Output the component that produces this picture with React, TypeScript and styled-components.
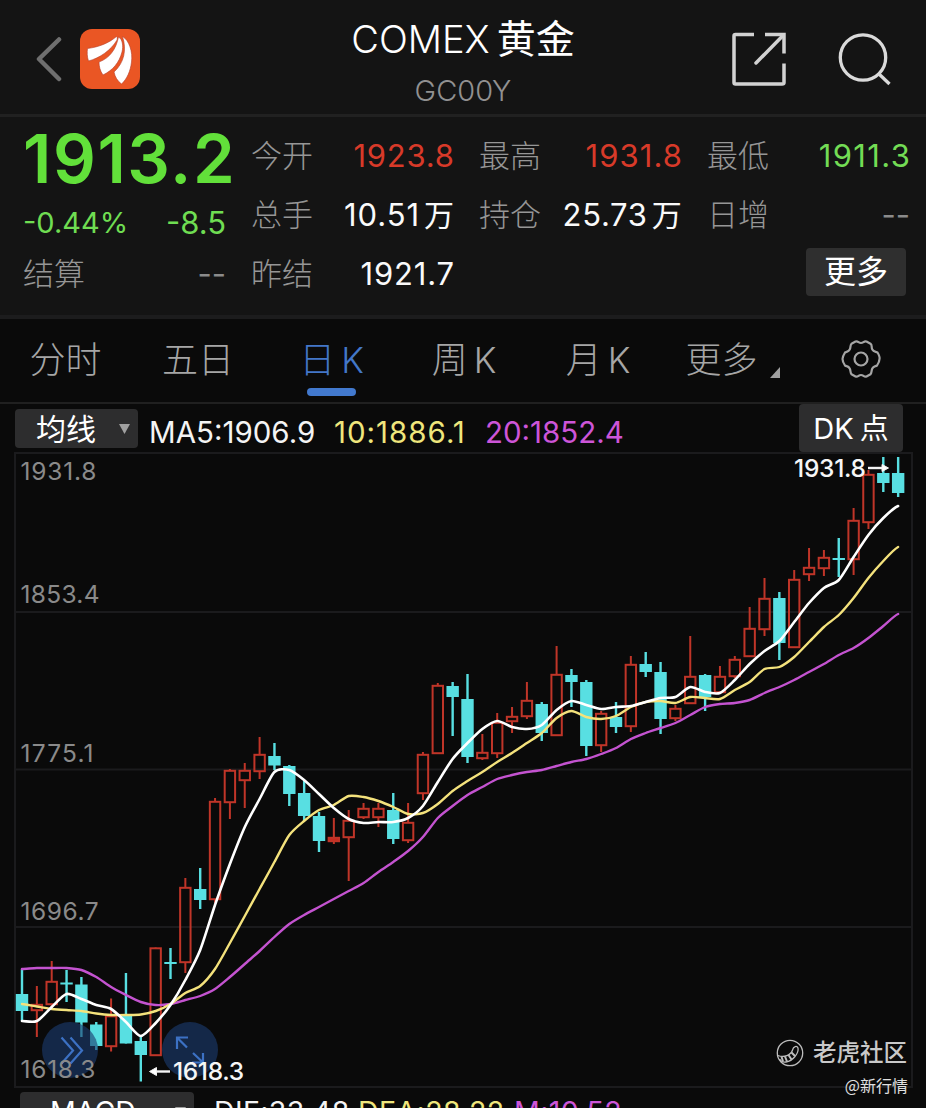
import React from "react";
import styled, { createGlobalStyle } from "styled-components";

const GlobalStyle = createGlobalStyle`
  html, body { margin: 0; padding: 0; background: #0a0a0a; }
  body { overflow: hidden; }
  * { box-sizing: border-box; }
`;

const FONT = `Inter, "Noto Sans CJK SC", sans-serif`;

const Screen = styled.main`
  width: 926px;
  height: 1108px;
  overflow: hidden;
  display: flex;
  flex-direction: column;
  background: #0a0a0a;
  color: #fff;
  font-family: ${FONT};
  white-space: nowrap;
`;

const Header = styled.header`
  flex: none;
  height: 117px;
  display: grid;
  grid-template-columns: 263px 400px 263px;
  background: #141414;
  border-bottom: 3px solid #212121;
`;

const HeaderSide = styled.div<{ $end?: boolean }>`
  display: flex;
  align-items: center;
  height: 118px;
  gap: ${(p) => (p.$end ? 52 : 18)}px;
  justify-content: ${(p) => (p.$end ? "flex-end" : "flex-start")};
  padding: ${(p) => (p.$end ? "0 35px 0 0" : "0 0 0 35px")};
`;

const Titles = styled.div`
  display: flex;
  flex-direction: column;
  align-items: center;
  padding-top: 14px;
`;

const Title = styled.h1`
  margin: 0;
  display: flex;
  gap: 7px;
  font-size: 38px;
  line-height: 50px;
  font-weight: 300;
`;

const TitleCjk = styled.span`
  font-size: 39px;
  font-weight: 400;
`;

const Code = styled.div`
  margin-top: 9px;
  font-size: 29px;
  line-height: 36px;
  font-weight: 300;
  color: #919191;
`;

const Quotes = styled.section`
  flex: none;
  height: 202px;
  display: grid;
  grid-template-columns: repeat(4, 203px);
  column-gap: 25px;
  padding: 9px 17px 0 23px;
  background: #141414;
  border-bottom: 4px solid #1c1c1d;
`;

const Column = styled.div`
  display: flex;
  flex-direction: column;
`;

const Cell = styled.div<{ $shift?: number }>`
  height: 59px;
  width: 203px;
  display: flex;
  align-items: center;
  justify-content: space-between;
  margin-top: ${(p) => p.$shift ?? 0}px;
`;

const Label = styled.span`
  font-size: 31px;
  line-height: 40px;
  color: #969696;
  font-weight: 300;
`;

const Value = styled.span<{ $color?: string; $ls?: number; $size?: number }>`
  display: flex;
  align-items: baseline;
  font-size: ${(p) => p.$size ?? 31}px;
  line-height: 40px;
  letter-spacing: ${(p) => p.$ls ?? 0}px;
  margin-right: ${(p) => -(p.$ls ?? 0)}px;
  color: ${(p) => p.$color ?? "#fafafa"};
`;

const Cjk = styled.span`
  margin: 0 1px 0 4px;
  font-size: 30px;
  letter-spacing: 0;
`;

const Price = styled.div`
  height: 67px;
  font-size: 67px;
  line-height: 65px;
  font-weight: 600;
  letter-spacing: 1.6px;
  color: #62e03a;
`;

const MoreButton = styled.button`
  align-self: flex-end;
  margin: 4px 4px 0 0;
  width: 100px;
  height: 48px;
  padding: 0 0 1px;
  border: 0;
  border-radius: 4px;
  background: #2f2f2f;
  color: #fff;
  font-family: ${FONT};
  font-size: 32px;
  line-height: 44px;
`;

const Tabs = styled.nav`
  flex: none;
  height: 85px;
  display: grid;
  grid-template-columns: 131px 134px 135px 130px 138px 107px 151px;
  border-bottom: 2px solid #202020;
`;

const Tab = styled.div<{ $active?: boolean }>`
  position: relative;
  display: flex;
  justify-content: center;
  gap: 6px;
  padding-top: 15px;
  font-size: 36px;
  line-height: 52px;
  font-weight: 300;
  color: ${(p) => (p.$active ? "#4377c8" : "#a6a6a6")};
  &::after {
    content: "";
    display: ${(p) => (p.$active ? "block" : "none")};
    position: absolute;
    left: 42px;
    bottom: 6px;
    width: 49px;
    height: 8px;
    border-radius: 4px;
    background: #4279ce;
  }
`;

const TabLetter = styled.span`
  margin-right: 2px;
  font-size: 35px;
`;

const Corner = styled.svg`
  position: absolute;
  right: -5px;
  top: 48px;
`;

const GearCell = styled.div`
  padding: 19px 0 0 65px;
`;

const Legend = styled.div`
  flex: none;
  height: 48px;
  display: flex;
  align-items: flex-start;
  padding: 0 23px 0 15px;
`;

const Picker = styled.div<{ $w: number; $h: number }>`
  flex: none;
  width: ${(p) => p.$w}px;
  height: ${(p) => p.$h}px;
  display: flex;
  align-items: center;
  justify-content: space-between;
  border-radius: 4px;
  background: #2d2d2e;
`;

const AveragePicker = styled(Picker)`
  margin-top: 5px;
  padding: 0 8px 0 21px;
  font-size: 30px;
  line-height: 36px;
`;

const Average = styled.span<{ $color: string; $w: number; $ls?: number }>`
  width: ${(p) => p.$w}px;
  margin-top: 8px;
  font-size: 29.5px;
  line-height: 40px;
  letter-spacing: ${(p) => p.$ls ?? 0}px;
  color: ${(p) => p.$color};
`;

const Averages = styled.div`
  flex: 1;
  display: flex;
  padding-left: 11px;
`;

const DkButton = styled.div`
  width: 104px;
  height: 48px;
  display: flex;
  justify-content: center;
  gap: 6px;
  border-radius: 4px;
  background: #2d2d2e;
  font-size: 29px;
  line-height: 49px;
`;

const ChartBox = styled.section`
  position: relative;
  flex: none;
  height: 640px;
`;

const ChartSvg = styled.svg`
  display: block;
`;

const Watermark = styled.div`
  position: absolute;
  right: 19px;
  top: 583px;
  display: flex;
  align-items: center;
  gap: 9px;
  font-size: 23.5px;
  line-height: 36px;
  font-weight: 500;
  color: #c9c9c9;
`;

const Author = styled.div`
  position: absolute;
  right: 18px;
  top: 622px;
  font-family: "Noto Sans CJK SC", sans-serif;
  font-size: 16px;
  line-height: 22px;
  color: #e0e0e0;
`;

const MacdBar = styled.div`
  flex: none;
  height: 50px;
  display: flex;
  align-items: flex-start;
  padding-left: 20px;
  font-size: 28.5px;
  line-height: 36px;
`;

const MacdPicker = styled(Picker)`
  padding: 0 8px 0 30px;
  margin-right: 20px;
`;

const MacdValue = styled.span<{ $color: string; $w: number }>`
  width: ${(p) => p.$w}px;
  margin-top: 2px;
  letter-spacing: 0.4px;
  color: ${(p) => p.$color};
`;

/* kind, high, open/close top, open/close bottom, low */
type Candle = ["u" | "d" | "f", number, number, number, number];

const candles: Candle[] = [
  ["d", 969, 994, 1011, 1021], ["u", 986, 1004, 1011, 1037], ["u", 961, 981, 1005, 1008],
  ["d", 970, 982.5, 984.5, 1002], ["d", 977, 984.5, 1022.5, 1037], ["d", 1022, 1024.5, 1046, 1050],
  ["u", 998.5, 1015.5, 1047, 1051.5], ["d", 973, 1015, 1043.5, 1043.5], ["d", 1035, 1041, 1055, 1081.5],
  ["u", 947, 947.5, 1056, 1056], ["d", 948, 962, 964, 979], ["u", 878, 887, 963, 973],
  ["d", 868, 889, 900, 909], ["u", 798, 801, 900, 903], ["u", 769, 770, 803, 819],
  ["u", 763, 770, 781, 808], ["u", 737, 754, 772, 779], ["d", 743, 756, 765.5, 770],
  ["d", 765, 766, 794, 806], ["d", 781, 793, 816, 821], ["d", 812, 816, 841, 852],
  ["f", 818, 837, 842, 844], ["u", 810, 820, 838, 881], ["u", 803, 808, 818, 819],
  ["u", 803, 808, 818, 827], ["d", 793, 810, 839, 844], ["u", 803, 822, 841, 843],
  ["u", 752, 754, 794, 800], ["u", 683, 685, 754, 754], ["d", 682, 686, 697, 736],
  ["d", 674, 699, 757, 763], ["u", 734, 752, 759, 760], ["u", 713, 722, 754, 758],
  ["u", 707, 716, 722, 733], ["u", 682, 700, 717, 719], ["d", 702, 704, 733, 741],
  ["u", 646, 674, 736, 736], ["d", 669, 675, 682, 707], ["d", 680, 682, 746, 756],
  ["u", 711, 713, 746, 752], ["d", 702, 717, 727, 733], ["u", 656, 664, 727, 732],
  ["d", 652, 664, 672, 677], ["d", 662, 672, 719, 734], ["u", 705, 708, 719, 721],
  ["u", 636, 676, 704, 704], ["d", 674, 675, 697, 711], ["u", 666, 676, 693, 693],
  ["u", 656, 659, 677, 678], ["u", 607, 628, 657, 657], ["u", 578, 598, 630, 636],
  ["d", 592, 598, 643, 660], ["u", 570, 579, 648, 648], ["u", 548, 567, 575, 581],
  ["u", 550, 557, 569, 576], ["d", 538, 558, 560, 577], ["u", 508, 520, 560, 575],
  ["u", 470, 474, 523, 529], ["d", 457, 473, 483, 492], ["d", 457, 473, 493, 497],
];

const ma5 = [
  1021, 1021, 1007, 994, 999, 1005, 1009, 1022, 1036, 1023, 1005, 980, 950, 905, 864, 827, 799, 772, 770, 780,
  794, 808, 819, 823, 822, 822, 818, 806, 782, 759, 743, 729, 721, 727, 729, 725, 710, 701, 705, 709,
  707, 706, 702, 698, 697, 687, 692, 693, 680, 664, 651, 641, 622, 603, 588, 580, 557, 535, 518, 506,
];
const ma10 = [
  1004, 1006.5, 1009, 1010, 1011, 1013.5, 1015, 1015, 1014.5, 1011, 1004, 993, 986, 969, 943, 916, 889, 862, 835, 821,
  810, 805, 796, 797, 801, 807, 814, 813, 804, 791, 781, 772, 762, 753, 743, 733, 718, 711, 717, 719,
  716, 707, 702, 701, 703, 697, 698, 699, 690, 682, 669, 667, 657, 642, 627, 615, 598, 578, 561, 547,
];
const ma20 = [
  969, 968, 968, 968, 970, 977, 987, 995, 1002, 1005, 1004, 1000, 996, 989, 977, 964, 951, 937, 924, 915,
  907, 899, 891, 883, 872, 862, 851, 837, 818, 806, 795, 787, 779, 775, 772, 770, 766, 762, 759, 754,
  748, 739, 733, 728, 723, 715, 707, 704, 703, 700, 693, 687, 680, 672, 664, 655, 648, 638, 626, 614,
];

const candleX = (i: number) => 22 + i * 14.85;

function smoothPath(ys: number[]) {
  let d = `M${candleX(0)} ${ys[0]}`;
  for (let i = 1; i < ys.length; i++) {
    const before = ys[Math.max(0, i - 2)];
    const after = ys[Math.min(ys.length - 1, i + 1)];
    const c1 = ys[i - 1] + (ys[i] - before) / 8;
    const c2 = ys[i] - (after - ys[i - 1]) / 8;
    const x0 = candleX(i - 1);
    const x1 = candleX(i);
    d += ` C${(x0 + 3.7).toFixed(1)} ${c1.toFixed(1)} ${(x1 - 3.7).toFixed(1)} ${c2.toFixed(1)} ${x1.toFixed(1)} ${ys[i]}`;
  }
  return d;
}

function CandleMark({ data, x }: { data: Candle; x: number }) {
  const [kind, high, top, bottom, low] = data;
  if (kind === "d") {
    return (
      <g fill="#58dfe2">
        <rect x={x - 1.2} y={high} width={2.4} height={low - high} />
        <rect x={x - 6.2} y={top} width={12.4} height={bottom - top} />
      </g>
    );
  }
  return (
    <g stroke="#c03528" strokeWidth={2} fill={kind === "f" ? "#c82920" : "none"}>
      <path d={`M${x} ${high}V${top}M${x} ${bottom}V${low}`} />
      <rect x={x - 5.2} y={top + 0.8} width={10.4} height={Math.max(1, bottom - top - 1.6)} />
    </g>
  );
}

const axis: [string, number, number][] = [
  ["1931.8", 480, 76], ["1853.4", 603, 79], ["1775.1", 762, 73], ["1696.7", 920, 78], ["1618.3", 1078, 75],
];

function KLineChart() {
  return (
    <ChartSvg width="926" height="640" viewBox="0 452 926 640" fontFamily={FONT}>
      <g stroke="#1b1b1d" strokeWidth="2" fill="none">
        <rect x="15" y="453" width="897" height="634" />
        <path d="M15 612H912M15 769.5H912M15 927H912" />
      </g>
      {candles.map((c, i) => <CandleMark key={i} data={c} x={candleX(i)} />)}
      <g fill="none" strokeWidth="2.4" strokeLinejoin="round" strokeLinecap="round">
        <path d={smoothPath(ma20)} stroke="#c453d0" />
        <path d={smoothPath(ma10)} stroke="#f4e27c" />
        <path d={smoothPath(ma5)} stroke="#fff" strokeWidth="2.6" />
      </g>
      <g fill="#1b3c70" fillOpacity=".62">
        <circle cx="70" cy="1050" r="28" />
        <circle cx="190" cy="1050" r="28" />
      </g>
      <g fill="none" stroke="#3c71c4" strokeWidth="2.2">
        <path d="M61.500 1037.500L73 1050.500L61.500 1063.500M70.500 1037.500L82 1050.500L70.500 1063.500" />
        <path d="M177 1049V1037.500H188M177.500 1038L187 1047.500M203 1053V1062.500H192M202.500 1062L193 1053" />
      </g>
      <g fontSize="24.500" fill="#8a8a8a">
        {axis.map(([label, y, w]) => (
          <text key={label} x="20.500" y={y} textLength={w} fontWeight="400">{label}</text>
        ))}
      </g>
      <g fill="#f6f6f6" fontSize="24.500" fontWeight="500">
        <text x="794" y="477" textLength="72">1931.8</text>
        <text x="173" y="1080" textLength="71">1618.3</text>
      </g>
      <g stroke="#f3f3f3" strokeWidth="2.400" fill="#fff">
        <path d="M868 468H884" />
        <path d="M882 464.500L888.500 468L882 471.500Z" strokeWidth="1" />
        <path d="M170 1071.500H155" />
        <path d="M156.500 1067.500L149.500 1071.500L156.500 1075.500Z" strokeWidth="1" />
      </g>
    </ChartSvg>
  );
}

function BrandLogo() {
  return (
    <svg width="60" height="60" viewBox="0 0 60 60">
      <rect width="60" height="60" rx="12" fill="#ea5624" />
      <g fill="#fff" stroke="#b5402c" strokeWidth=".6">
        <path d="M7.500 19.500C19 18 29 14 36.500 7.500C37.500 8.500 37.500 10 36.700 11.500C31 21 20 29 8.500 32C7 28 7 23 7.500 19.500Z" />
        <path d="M19 33C30 29 36 20 38.500 8C42.500 10 43.500 17 42 23C39 34 33 41 23 46C20 42 19 37 19 33Z" />
        <path d="M34 43C44 34 47 21 42.500 7.500C49 11 53 23 51.500 33C50.500 42 47 50 41.500 55C37.500 52 35 48 34 43Z" />
      </g>
    </svg>
  );
}

function App() {
  return (
    <>
      <GlobalStyle />
      <Screen>
        <Header>
          <HeaderSide>
            <svg width="27" height="46" viewBox="0 0 27 46" fill="none" stroke="#6f6f6f" strokeWidth="4.500" strokeLinecap="round" strokeLinejoin="round">
              <path d="M24 3.500L4 23L24 43" />
            </svg>
            <BrandLogo />
          </HeaderSide>
          <Titles>
            <Title><span>COMEX</span><TitleCjk>黄金</TitleCjk></Title>
            <Code>GC00Y</Code>
          </Titles>
          <HeaderSide $end>
            <svg width="54" height="54" viewBox="0 0 54 54" fill="none" stroke="#d2d2d2" strokeWidth="3.500" strokeLinejoin="round">
              <path d="M22 2.500H3.500Q2 2.500 2 4V50.500Q2 52 3.500 52H50Q52 52 52 50.500V31.500" />
              <path d="M33 2.500H52V21.500" strokeLinejoin="miter" />
              <path d="M51 3.500L24 31" strokeLinecap="round" />
            </svg>
            <svg width="53" height="54" viewBox="0 0 53 54" fill="none" stroke="#dadada" strokeWidth="3.300">
              <circle cx="25" cy="25.500" r="22.700" />
              <path d="M41 42L51.500 52" />
            </svg>
          </HeaderSide>
        </Header>

        <Quotes>
          <Column>
            <Price>1913.2</Price>
            <Cell>
              <Value $color="#6fdd52" $size={29}>-0.44%</Value>
              <Value $color="#6fdd52">-8.5</Value>
            </Cell>
            <Cell $shift={-8}><Label>结算</Label><Value $color="#8b8b8b">--</Value></Cell>
          </Column>
          <Column>
            <Cell><Label>今开</Label><Value $color="#d83a29" $ls={0.8}>1923.8</Value></Cell>
            <Cell><Label>总手</Label><Value $ls={0.9}>10.51<Cjk>万</Cjk></Value></Cell>
            <Cell><Label>昨结</Label><Value $ls={0.8}>1921.7</Value></Cell>
          </Column>
          <Column>
            <Cell><Label>最高</Label><Value $color="#d83a29" $ls={1.1}>1931.8</Value></Cell>
            <Cell><Label>持仓</Label><Value $ls={0.7}>25.73<Cjk>万</Cjk></Value></Cell>
          </Column>
          <Column>
            <Cell><Label>最低</Label><Value $color="#73dc55" $ls={1.4}>1911.3</Value></Cell>
            <Cell><Label>日增</Label><Value $color="#8b8b8b">--</Value></Cell>
            <MoreButton>更多</MoreButton>
          </Column>
        </Quotes>

        <Tabs>
          <Tab>分时</Tab>
          <Tab>五日</Tab>
          <Tab $active><span>日</span><TabLetter>K</TabLetter></Tab>
          <Tab><span>周</span><TabLetter>K</TabLetter></Tab>
          <Tab><span>月</span><TabLetter>K</TabLetter></Tab>
          <Tab>
            更多
            <Corner width="10" height="11" viewBox="0 0 10 11"><path d="M10 0V11H0Z" fill="#a0a0a0" /></Corner>
          </Tab>
          <GearCell>
            <svg width="42" height="42" viewBox="0 0 42 42" fill="none" stroke="#a5a5a5" strokeWidth="2.200" strokeLinejoin="round">
              <path d="M15.500 3.500C18 2.500 18.500 5 21 5S24 2.500 26.500 3.500L30.500 5.700C32.500 7.200 31 9 32.300 11.500S36 13.500 37.500 14.500C39 17 40 19.500 39.500 21C39.500 23.500 38 26 37 27.500C35.500 28.500 33.500 28 32.300 30.500S32 34.500 30.500 36.300L26.500 38.500C24 39.500 23.500 37 21 37S18 39.500 15.500 38.500L11.500 36.300C10 34.500 11 33 9.700 30.500S6.500 28.500 5 27.500C4 26 2.500 23.500 2.500 21C2.500 19.500 3.500 17 5 14.500C6.500 13.500 8.400 14 9.700 11.500S10 7.200 11.500 5.700Z" />
              <circle cx="21" cy="21" r="6.500" />
            </svg>
          </GearCell>
        </Tabs>

        <Legend>
          <AveragePicker $w={123} $h={39}>
            均线
            <svg width="11" height="10" viewBox="0 0 11 10"><path d="M0 0H11L5.500 10Z" fill="#a0a0a0" /></svg>
          </AveragePicker>
          <Averages>
            <Average $color="#f4f4f4" $w={185}>MA5:1906.9</Average>
            <Average $color="#efe67c" $w={151} $ls={1}>10:1886.1</Average>
            <Average $color="#cd55d8" $w={150}>20:1852.4</Average>
          </Averages>
          <DkButton><span>DK</span><span>点</span></DkButton>
        </Legend>

        <ChartBox>
          <KLineChart />
          <Watermark>
            <svg width="28" height="28" viewBox="0 0 28 28" fill="none" stroke="#bdbdbd" strokeWidth="1.300">
              <circle cx="14" cy="14" r="12.700" />
              <path d="M2 16.500C8 19 15 16 16.500 11C17.500 7 21 6.500 22 9C23 14 17 22 10 23C7 23.500 4.500 22 3.500 20" />
              <path d="M5.500 17.500L7 22.500M9 17.500L11 22.500M12.500 16L15.500 20.500M15.500 13.500L19 17" strokeWidth="2" />
            </svg>
            老虎社区
          </Watermark>
          <Author>@新行情</Author>
        </ChartBox>

        <MacdBar>
          <MacdPicker $w={174} $h={40}>
            MACD
            <svg width="11" height="10" viewBox="0 0 11 10"><path d="M0 0H11L5.500 10Z" fill="#a0a0a0" /></svg>
          </MacdPicker>
          <MacdValue $color="#f4f4f4" $w={144}>DIF:33.48</MacdValue>
          <MacdValue $color="#efe67c" $w={156}>DEA:28.22</MacdValue>
          <MacdValue $color="#cd55d8" $w={120}>M:10.52</MacdValue>
        </MacdBar>
      </Screen>
    </>
  );
}

export default App;
